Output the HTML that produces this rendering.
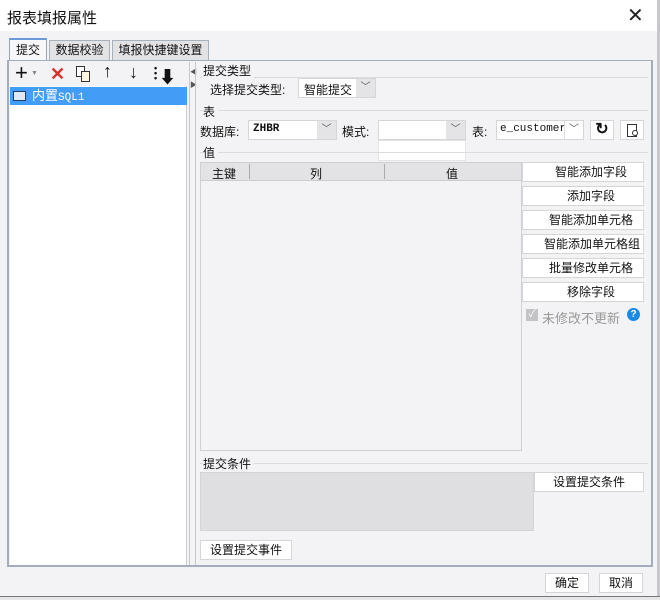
<!DOCTYPE html>
<html><head><meta charset="utf-8"><style>
*{margin:0;padding:0;box-sizing:border-box}
body{width:660px;height:600px;background:#f3f3f5;font-family:"Liberation Sans","Noto Sans CJK SC",sans-serif;font-size:12px;color:#111;position:relative;overflow:hidden}
.a{position:absolute}
.btn{position:absolute;background:#fff;border:1px solid #d6d6d8;text-align:center;font-size:12px;line-height:18px}
.rb{text-align:right;padding-right:18px}
.cb{position:absolute;background:#fff;border:1px solid #d6d6d8;height:20px}
.cb .ar{position:absolute;right:0;top:0;width:19px;height:18px;background:#e4e4e6;color:#555;font-size:10px;text-align:center;line-height:18px}
.sec{position:absolute;height:1px;background:#dcdce0}
.lab{position:absolute;font-size:12px;background:#f3f3f5;padding-right:3px}
</style></head><body>
<div class="a" style="left:0;top:0;width:660px;height:31px;background:#fff"></div>
<div class="a" style="left:7px;top:7px;font-size:15px">报表填报属性</div>
<div class="a" style="left:627px;top:3px;font-size:20px;color:#222">✕</div>
<div class="a" style="left:657px;top:0;width:3px;height:600px;background:#c8c8cc"></div>
<div class="a" style="left:0;top:596px;width:660px;height:4px;background:#e6e6e6;border-top:1px solid #777"></div>
<!-- tabs -->
<div class="a" style="left:9px;top:38px;width:38px;height:23px;background:#f7f7f9;border:1px solid #9aa6b8;border-bottom:none;border-top:2px solid #6a9bd8;text-align:center;line-height:20px">提交</div>
<div class="a" style="left:49px;top:40px;width:61px;height:21px;background:#e3e3e6;border:1px solid #a8b0bc;text-align:center;line-height:19px">数据校验</div>
<div class="a" style="left:112px;top:40px;width:97px;height:21px;background:#e3e3e6;border:1px solid #a8b0bc;text-align:center;line-height:19px">填报快捷键设置</div>
<div class="a" style="left:7px;top:60px;width:646px;height:507px;border:2px solid #a3adbb;border-top:1px solid #a3adbb"></div>
<!-- left -->
<div class="a" style="left:15px;top:63px;font-size:22px;line-height:20px">+</div>
<div class="a" style="left:31px;top:70px;font-size:7px;color:#888">▼</div>
<div class="a" style="left:50px;top:63px;font-size:18px;color:#e0302a;font-weight:bold;line-height:22px">✕</div>
<div class="a" style="left:76px;top:66px;width:9px;height:11px;border:1.5px solid #333;background:#fff"></div>
<div class="a" style="left:81px;top:71px;width:9px;height:11px;border:1.5px solid #333;background:#fff8e0"></div>
<div class="a" style="left:103px;top:61px;font-size:18px;font-weight:bold">↑</div>
<div class="a" style="left:129px;top:62px;font-size:18px;font-weight:bold">↓</div>
<div class="a" style="left:154px;top:66px;font-size:9px;line-height:5px;font-weight:bold">•<br>•<br>•</div>
<div class="a" style="left:159px;top:63px;font-size:17px;font-weight:bold">⬇</div>
<div class="a" style="left:10px;top:86px;width:177px;height:479px;background:#fff;border-right:1px solid #ccc"></div>
<div class="a" style="left:10px;top:87px;width:177px;height:18px;background:#439cf6;color:#fff;line-height:18px;padding-left:22px;font-size:13px">内置<span style="font-family:'Liberation Mono';font-size:11px">SQL1</span></div>
<div class="a" style="left:13px;top:91px;width:13px;height:10px;border:1.5px solid #1d3f70;background:#dfe9f5"></div>
<div class="a" style="left:189px;top:62px;width:1px;height:503px;background:#c8c8cc"></div>
<div class="a" style="left:190px;top:66px;font-size:7px;color:#555;line-height:13px">◀<br>▶</div>
<div class="a" style="left:195px;top:62px;width:1px;height:503px;background:#c8c8cc"></div>
<!-- right -->
<div class="sec" style="left:200px;top:77px;width:448px"></div><div class="lab" style="left:203px;top:62px">提交类型</div>
<div class="a" style="left:210px;top:81px">选择提交类型:</div>
<div class="cb" style="left:298px;top:78px;width:78px"><span class="a" style="left:5px;top:2px">智能提交</span><span class="ar">﹀</span></div>
<div class="sec" style="left:200px;top:110px;width:448px"></div><div class="lab" style="left:203px;top:103px">表</div>
<div class="a" style="left:200px;top:123px">数据库:</div>
<div class="cb" style="left:248px;top:120px;width:89px"><span class="a" style="left:4px;top:2px;font-family:'Liberation Mono';font-size:11px;font-weight:bold">ZHBR</span><span class="ar">﹀</span></div>
<div class="a" style="left:342px;top:123px">模式:</div>
<div class="cb" style="left:378px;top:120px;width:88px"><span class="ar">﹀</span></div>
<div class="a" style="left:378px;top:140px;width:88px;height:21px;background:#fff;border:1px solid #e4e4e4"></div>
<div class="a" style="left:472px;top:123px">表:</div>
<div class="cb" style="left:496px;top:120px;width:88px"><span class="a" style="left:3px;top:2px;font-family:'Liberation Mono';font-size:11px">e_customer</span><span class="ar" style="background:#fff;border-left:1px solid #ddd">﹀</span></div>
<div class="btn" style="left:590px;top:120px;width:24px;height:20px;font-size:16px;font-weight:bold">↻</div>
<div class="btn" style="left:620px;top:120px;width:24px;height:20px"><div class="a" style="left:6px;top:3px;width:10px;height:13px;border:1.2px solid #333"></div><div class="a" style="left:11px;top:9px;width:6px;height:6px;border:1.2px solid #333;border-radius:50%;background:#fff"></div></div>
<div class="sec" style="left:200px;top:152px;width:448px"></div><div class="lab" style="left:203px;top:144px">值</div>
<div class="a" style="left:200px;top:162px;width:322px;height:289px;border:1px solid #d0d0d4;background:#f3f3f5"></div>
<div class="a" style="left:201px;top:163px;width:320px;height:18px;background:#e3e3e5;border-bottom:1px solid #ccc"></div>
<div class="a" style="left:212px;top:165px">主键</div>
<div class="a" style="left:249px;top:164px;width:1px;height:15px;background:#aaa"></div>
<div class="a" style="left:310px;top:165px">列</div>
<div class="a" style="left:384px;top:164px;width:1px;height:15px;background:#aaa"></div>
<div class="a" style="left:446px;top:165px">值</div>
<div class="btn rb" style="left:522px;top:162px;width:122px;height:20px;padding-right:16px">智能添加字段</div>
<div class="btn rb" style="left:522px;top:186px;width:122px;height:20px;padding-right:28px">添加字段</div>
<div class="btn rb" style="left:522px;top:210px;width:122px;height:20px;padding-right:10px">智能添加单元格</div>
<div class="btn rb" style="left:522px;top:234px;width:122px;height:20px;padding-right:3px">智能添加单元格组</div>
<div class="btn rb" style="left:522px;top:258px;width:122px;height:20px;padding-right:10px">批量修改单元格</div>
<div class="btn rb" style="left:522px;top:282px;width:122px;height:20px;padding-right:28px">移除字段</div>
<div class="a" style="left:526px;top:309px;width:12px;height:12px;background:#c4c4c6;color:#fff;font-size:10px;text-align:center;line-height:12px">✓</div>
<div class="a" style="left:542px;top:308px;color:#999;font-size:13px">未修改不更新</div>
<div class="a" style="left:627px;top:308px;width:13px;height:13px;border-radius:50%;background:#1a8ae8;color:#fff;font-size:10px;font-weight:bold;text-align:center;line-height:13px">?</div>
<div class="sec" style="left:200px;top:463px;width:448px"></div><div class="lab" style="left:203px;top:455px">提交条件</div>
<div class="a" style="left:200px;top:472px;width:334px;height:59px;background:#dfdfe1;border:1px solid #d4d4d6"></div>
<div class="btn" style="left:534px;top:472px;width:110px;height:20px">设置提交条件</div>
<div class="btn" style="left:200px;top:540px;width:92px;height:20px">设置提交事件</div>
<div class="btn" style="left:545px;top:573px;width:44px;height:20px">确定</div>
<div class="btn" style="left:599px;top:573px;width:44px;height:20px">取消</div>
</body></html>
